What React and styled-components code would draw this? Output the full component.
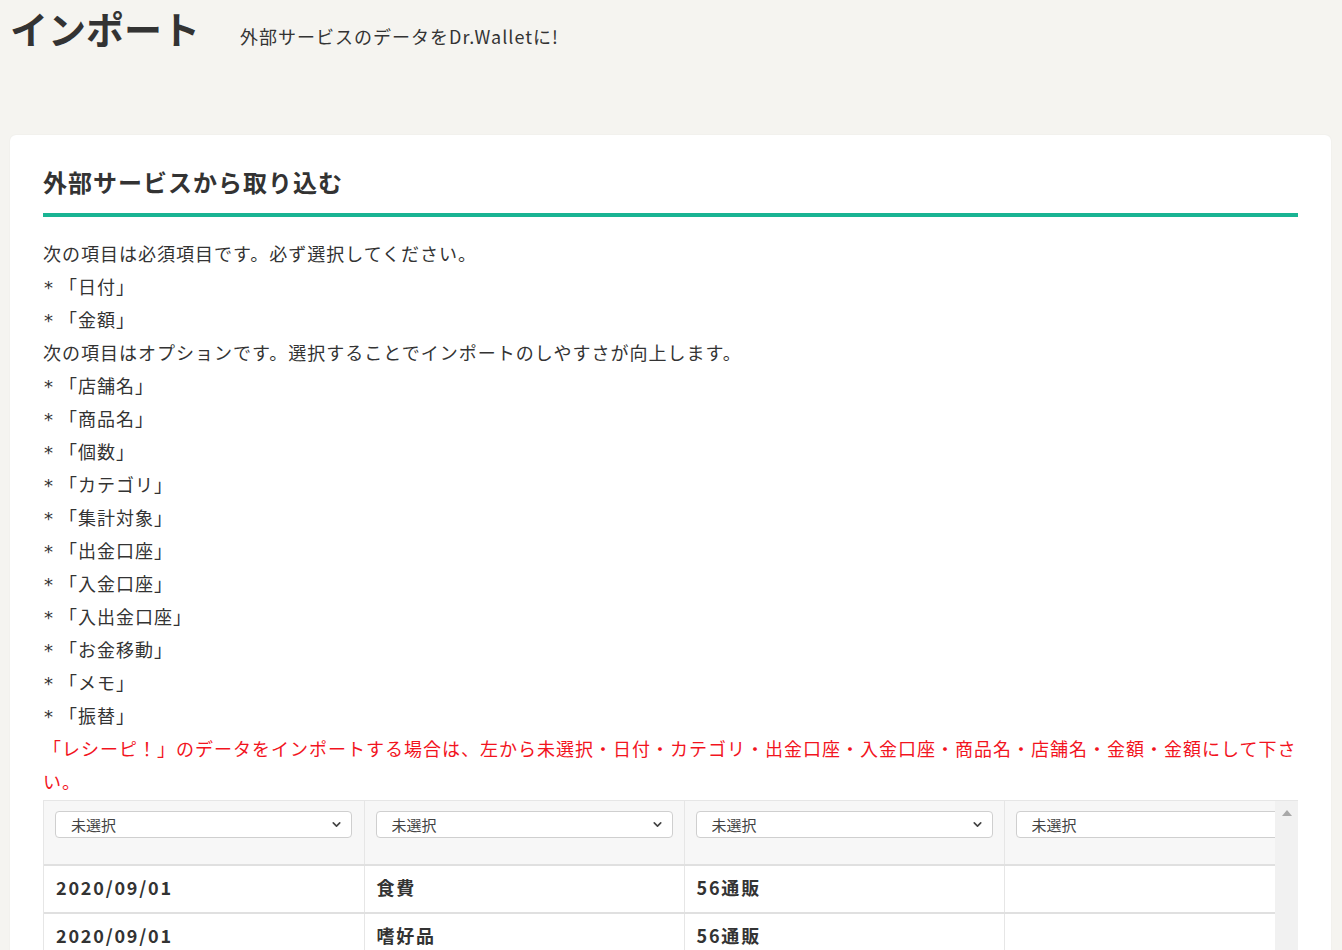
import React from "react";
import styled, { createGlobalStyle } from "styled-components";
import { ChevronDown } from "lucide-react";

const GlobalStyle = createGlobalStyle`
  html, body {
    margin: 0;
    padding: 0;
    background: #f5f4f0;
    font-family: "Noto Sans CJK JP", "Noto Sans", sans-serif;
    color: #333;
  }
`;

const Page = styled.div`
  padding: 0 11px 40px 10px;
`;

const PageHeader = styled.div`
  display: flex;
  align-items: baseline;
  gap: 40px;
  padding-top: 4px;
  height: 135px;
  box-sizing: border-box;
  .page_title {
    margin: 0;
    font-size: 38px;
    line-height: 48px;
    font-weight: 700;
    color: #333;
  }
  .page_subtitle {
    font-size: 18px;
    color: #333;
    letter-spacing: 1px;
  }
`;

const Card = styled.div`
  background: #fff;
  border-radius: 6px;
  box-shadow: 0 0 2px rgba(0, 0, 0, 0.06);
  padding: 29px 33px 40px 33px;
`;

const CardTitle = styled.h2`
  margin: 0;
  font-size: 24px;
  line-height: 36px;
  font-weight: 700;
  letter-spacing: 1px;
  color: #333;
  padding-bottom: 13px;
  border-bottom: 4px solid #19b493;
`;

const Notes = styled.div`
  margin-top: 20px;
  font-size: 18px;
  line-height: 33px;
  letter-spacing: 1px;
  color: #333;
`;

const Line = styled.div`
  color: ${(p) => (p.$warn ? "#f2141e" : "#333")};
  height: ${(p) => (p.$warn ? "auto" : "33px")};
`;

const Mark = styled.span`
  display: inline-block;
  width: 15px;
  padding-left: 1px;
  font-family: "DejaVu Sans", sans-serif;
  font-size: 18px;
  line-height: 1;
  color: #333;
`;

const TableFrame = styled.div`
  margin-top: 2px;
  display: flex;
  border-top: 1px solid #e6e6e6;
  border-left: 1px solid #e6e6e6;
`;

const TableArea = styled.div`
  flex: 1;
  min-width: 0;
  overflow: hidden;
`;

const ScrollTrack = styled.div`
  width: 23px;
  flex-shrink: 0;
  background: #f1f1f1;
  display: flex;
  justify-content: center;
  padding-top: 9px;
  .arrow {
    width: 0;
    height: 0;
    border-left: 5px solid transparent;
    border-right: 5px solid transparent;
    border-bottom: 6px solid #a8a8a8;
  }
`;

const Table = styled.table`
  border-collapse: collapse;
  table-layout: fixed;
  width: 1232px;
`;

const HeadCell = styled.th`
  width: ${(p) => (p.$last ? "272px" : "320px")};
  box-sizing: border-box;
  background: #f7f7f7;
  padding: 10px 11px 26px 11px;
  padding-right: ${(p) => (p.$last ? "0" : "11px")};
  border-right: ${(p) => (p.$last ? "none" : "1px solid #e6e6e6")};
  border-bottom: 2px solid #e0e0e0;
  text-align: left;
  vertical-align: top;
  overflow: hidden;
`;

const SelectWrap = styled.div`
  position: relative;
  width: 297px;
  height: 27px;
  .chevron {
    position: absolute;
    right: 9px;
    top: 7px;
    pointer-events: none;
    color: #444;
  }
`;

const Select = styled.select`
  appearance: none;
  width: 100%;
  height: 27px;
  box-sizing: border-box;
  border: 1px solid #cfcfcf;
  border-radius: 4px;
  background: #fff;
  padding: 0 0 0 15px;
  font-family: "Noto Sans CJK JP", "Noto Sans", sans-serif;
  font-size: 15px;
  color: #444;
`;

const Cell = styled.td`
  height: 48px;
  box-sizing: border-box;
  padding: 0 12px 4px 12px;
  background: #fff;
  border-right: ${(p) => (p.$last ? "none" : "1px solid #e6e6e6")};
  border-bottom: 2px solid #e0e0e0;
  font-size: 18px;
  font-weight: 700;
  letter-spacing: 1.8px;
  color: #333;
  white-space: nowrap;
  overflow: hidden;
`;

const required = ["日付", "金額"];
const optional = [
  "店舗名",
  "商品名",
  "個数",
  "カテゴリ",
  "集計対象",
  "出金口座",
  "入金口座",
  "入出金口座",
  "お金移動",
  "メモ",
  "振替",
];

const rows = [
  ["2020/09/01", "食費", "56通販", ""],
  ["2020/09/01", "嗜好品", "56通販", ""],
  ["2020/09/02", "日用品", "56通販", ""],
  ["2020/09/03", "食費", "スーパー", ""],
];

const COLS = 4;

const App = () => {
  return (
    <Page>
      <GlobalStyle />
      <PageHeader>
        <h1 className="page_title">インポート</h1>
        <div className="page_subtitle">外部サービスのデータをDr.Walletに!</div>
      </PageHeader>
      <Card>
        <CardTitle>外部サービスから取り込む</CardTitle>
        <Notes>
          <Line>次の項目は必須項目です。必ず選択してください。</Line>
          {required.map((r) => (
            <Line key={r}>
              <Mark>*</Mark>「{r}」
            </Line>
          ))}
          <Line>次の項目はオプションです。選択することでインポートのしやすさが向上します。</Line>
          {optional.map((r) => (
            <Line key={r}>
              <Mark>*</Mark>「{r}」
            </Line>
          ))}
          <Line $warn>
            「レシーピ！」のデータをインポートする場合は、左から未選択・日付・カテゴリ・出金口座・入金口座・商品名・店舗名・金額・金額にして下さい。
          </Line>
        </Notes>
        <TableFrame>
          <TableArea>
            <Table>
              <thead>
                <tr>
                  {Array.from({ length: COLS }).map((_, i) => (
                    <HeadCell key={i} $last={i === COLS - 1}>
                      <SelectWrap>
                        <Select defaultValue="none">
                          <option value="none">未選択</option>
                          <option value="date">日付</option>
                          <option value="amount">金額</option>
                          <option value="shop">店舗名</option>
                          <option value="item">商品名</option>
                          <option value="category">カテゴリ</option>
                        </Select>
                        <ChevronDown className="chevron" size={13} strokeWidth={3} />
                      </SelectWrap>
                    </HeadCell>
                  ))}
                </tr>
              </thead>
              <tbody>
                {rows.map((r, i) => (
                  <tr key={i}>
                    {r.map((c, j) => (
                      <Cell key={j} $last={j === COLS - 1}>
                        {c}
                      </Cell>
                    ))}
                  </tr>
                ))}
              </tbody>
            </Table>
          </TableArea>
          <ScrollTrack>
            <div className="arrow" />
          </ScrollTrack>
        </TableFrame>
      </Card>
    </Page>
  );
};

export default App;
